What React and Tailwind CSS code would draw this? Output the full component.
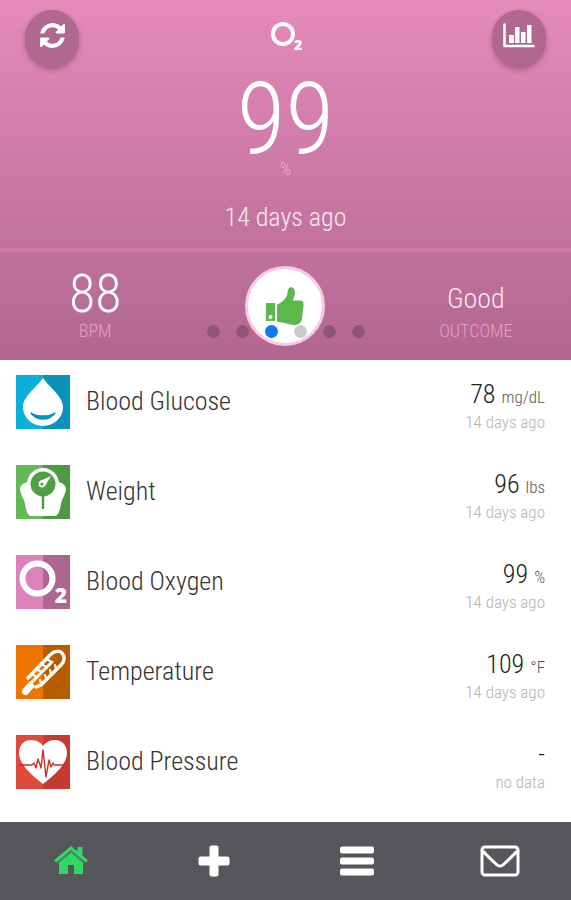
const readings = [
  { name: 'Blood Glucose', value: '78', unit: 'mg/dL', when: '14 days ago', Icon: GlucoseIcon },
  { name: 'Weight', value: '96', unit: 'lbs', when: '14 days ago', Icon: WeightIcon },
  { name: 'Blood Oxygen', value: '99', unit: '%', when: '14 days ago', Icon: OxygenIcon },
  { name: 'Temperature', value: '109', unit: '°F', when: '14 days ago', Icon: TemperatureIcon },
  { name: 'Blood Pressure', value: '-', unit: '', when: 'no data', Icon: PressureIcon },
];

const pages = [
  'bg-black/20',
  'bg-black/20',
  'bg-[#0a7cf5]',
  'bg-black/20',
  'bg-black/20',
  'bg-black/20',
];

function Tile({ left, right, children }) {
  return (
    <svg viewBox="0 0 54 54" className="size-[54px] shrink-0" aria-hidden="true">
      <rect width="27" height="54" fill={left} />
      <rect x="27" width="27" height="54" fill={right} />
      {children}
    </svg>
  );
}

function GlucoseIcon() {
  return (
    <Tile left="#0bb0d8" right="#0a93b8">
      <path d="M27 3C23 10 7 21 7 32a20 19 0 0 0 40 0C47 21 31 10 27 3Z" fill="#fff" />
      <path d="M15 38c6 8 18 8 24 0-6 4-18 4-24 0Z" fill="#0a93b8" stroke="#0a93b8" strokeWidth="1.5" strokeLinejoin="round" />
    </Tile>
  );
}

function WeightIcon() {
  return (
    <Tile left="#62b955" right="#4e9a44">
      <path
        d="M12 17h30c3 0 8 3 8 7 0 5-4 9-5 15-1 7-3 12-6 12H15c-3 0-5-5-6-12C8 33 4 29 4 24c0-4 5-7 8-7Z"
        fill="#fff"
      />
      <circle cx="27" cy="19" r="16" fill="#fff" />
      <circle cx="27" cy="19" r="12.5" fill="#4fa045" />
      <path d="M27 28v16" stroke="#4e9a44" strokeWidth="2.4" />
      <path d="M35 11 24 16l0 5 5 0Z" fill="#fff" />
      <circle cx="26" cy="19" r="3.4" fill="#fff" />
      <circle cx="26" cy="19" r="1.5" fill="#4e9a44" />
    </Tile>
  );
}

function OxygenIcon() {
  return (
    <Tile left="#dc82b8" right="#ac668f">
      <circle cx="21.5" cy="23.5" r="15" fill="none" stroke="#fff" strokeWidth="6" />
      <text x="45" y="48" textAnchor="middle" fontSize="21" fontWeight="800" fill="#fff" className="font-['Open_Sans',sans-serif]">2</text>
    </Tile>
  );
}

function TemperatureIcon() {
  return (
    <Tile left="#ef7400" right="#b85c00">
      <path d="M12 33 34 10c4-4 9-5 12-2s3 8-1 12L25 40l-5 2" fill="none" stroke="#fff" strokeWidth="3.4" strokeLinecap="round" strokeLinejoin="round" />
      <path d="M12 41 36 17" stroke="#fff" strokeWidth="3" strokeLinecap="round" />
      <path d="m15 29 4 2M20 24l4 2M25 19l4 2M30 14l4 2M25 39l-1-4M30 34l-1-4M35 29l-1-4M40 24l-1-4" fill="none" stroke="#fff" strokeWidth="2.2" strokeLinecap="round" />
      <path d="m14 36-7 8a3.500 3.500 0 0 0 5 5l7-8Z" fill="#fff" />
    </Tile>
  );
}

function PressureIcon() {
  return (
    <Tile left="#e04a3c" right="#c53a30">
      <path d="M27 49C17 41 3 30 3 18 3 9 9 5 15 5c6 0 10 3 12 6 2-3 6-6 12-6s12 4 12 13c0 12-14 23-24 31Z" fill="#fff" />
      <path d="M3 30h13l2-2 2 5 2-9 3 9 2-18 3 27 3-17 2 7 2-4 1 2h13" fill="none" stroke="#c62f28" strokeWidth="1.4" strokeLinejoin="round" />
    </Tile>
  );
}

function RoundButton({ label, children }) {
  return (
    <button
      type="button"
      aria-label={label}
      className="flex h-[58px] w-[54px] items-start justify-center rounded-full bg-[#b0688f] pt-[13px] shadow-[0_2px_5px_rgba(90,30,70,0.35)]"
    >
      {children}
    </button>
  );
}

function Reading({ name, value, unit, when, Icon }) {
  return (
    <li className="flex h-[90px] items-start gap-4 last:h-20">
      <Icon />
      <span className="flex-1 pt-2 text-[26px] leading-9 text-[#333]">{name}</span>
      <div className="pt-px text-right">
        <p className="text-[26px] leading-9 text-[#222]">
          {value}
          {unit && <span className="ml-[6px] text-[17px] leading-none text-[#555]">{unit}</span>}
        </p>
        <p className="text-[17px] leading-5 text-[#b4b4b4]">{when}</p>
      </div>
    </li>
  );
}

export default function App() {
  return (
    <div className="flex min-h-screen flex-col bg-white font-['Roboto_Condensed','Roboto',sans-serif] font-light">
      <header className="bg-linear-to-b from-[#e68abc] to-[#b0678f]">
        <div className="flex h-[248px] items-start justify-between px-[25px] pt-[10px]">
          <RoundButton label="Refresh">
            <svg viewBox="128 128 1536 1536" className="size-[25px]" fill="#fff" aria-hidden="true">
              <path d="M1639 1056q0 5-1 7-64 268-268 434.500t-478 166.500q-146 0-282.500-55t-243.500-157l-129 129q-19 19-45 19t-45-19-19-45v-448q0-26 19-45t45-19h448q26 0 45 19t19 45-19 45l-137 137q71 66 161 102t187 36q134 0 250-65t186-179q11-17 53-117 8-23 30-23h192q13 0 22.500 9.500t9.500 22.500zm25-800v448q0 26-19 45t-45 19h-448q-26 0-45-19t-19-45 19-45l138-138q-148-137-349-137-134 0-250 65t-186 179q-11 17-53 117-8 23-30 23h-199q-13 0-22.500-9.500t-9.500-22.500v-7q65-268 270-434.500t480-166.500q146 0 284 55.500t245 156.500l130-129q19-19 45-19t45 19 19 45z" />
            </svg>
          </RoundButton>
          <div className="flex flex-col items-center pt-[10px] text-white">
            <svg viewBox="0 0 34 32" className="h-8 w-[34px] overflow-visible" aria-label="Blood oxygen">
              <circle cx="14" cy="14" r="10" fill="none" stroke="#fff" strokeWidth="4" />
              <text x="29" y="30" textAnchor="middle" fontSize="14" fontWeight="800" fill="#fff" className="font-['Open_Sans',sans-serif]">2</text>
            </svg>
            <p className="mt-[18px] text-[100px] leading-[100px]">99</p>
            <p className="-mt-[11px] text-[18px] leading-5 text-[#f3b0d6]">%</p>
            <p className="mt-5 text-[26px] leading-9 text-[#fbe6f2]">14 days ago</p>
          </div>
          <RoundButton label="Charts">
            <svg viewBox="0 0 32 25" className="h-[25px] w-8" aria-hidden="true">
              <path d="M1.500 1.500v21.500H30.500" fill="none" stroke="#fff" strokeWidth="2.500" strokeLinejoin="round" strokeLinecap="round" />
              <path d="M6 12h5v8H6zM12 4h4.500v16H12zM18 9h4.500v11H18zM24 2h4.500v18H24z" fill="#fff" />
            </svg>
          </RoundButton>
        </div>
        <section className="relative grid h-[112px] grid-cols-3 border-t-4 border-[#cd7ba8]">
          <div className="flex flex-col items-center pt-[15px]">
            <p className="text-[54px] leading-[54px] text-white">88</p>
            <p className="text-[18px] leading-5 text-[#e79bc7]">BPM</p>
          </div>
          <div className="flex justify-center pt-[14px]">
            <div className="flex size-20 items-center justify-center rounded-full border-[3px] border-[#fbc8e3] bg-white">
              <svg viewBox="0 0 38 38" className="size-[38px]" fill="#5cb84c" aria-label="Thumbs up">
                <path fillRule="evenodd" d="M0 16h9v18H0zM4.500 28a2 2 0 1 0 0 4 2 2 0 0 0 0-4Z" />
                <path d="M12 17c4-1 8-6 9-9 1-2 0-6 3-7.500 3-1 5 2 5 5 0 3-2 6-2 8h7c3 0 4 2 3.500 5L36 32c-1 4-4 6-8 6-5 0-10-3-16-3l-1-1V18Z" />
              </svg>
            </div>
          </div>
          <div className="flex flex-col items-center pt-[29px]">
            <p className="text-[28px] leading-9 text-[#fbe6f2]">Good</p>
            <p className="mt-1 text-[18px] leading-5 text-[#e79bc7]">OUTCOME</p>
          </div>
          <div className="absolute inset-x-0 bottom-[22px] flex justify-center gap-4">
            {pages.map((color, i) => (
              <span key={i} className={'size-[13px] rounded-full ' + color} />
            ))}
          </div>
        </section>
      </header>

      <main className="flex-1">
        <ul className="pr-[26px] pt-[15px] pl-4">
          {readings.map((reading) => (
            <Reading key={reading.name} {...reading} />
          ))}
        </ul>
      </main>

      <nav className="grid h-[78px] grid-cols-4 items-center justify-items-center bg-[#56575a] text-white">
        <button type="button" aria-label="Home">
          <svg viewBox="0 0 34 30" className="h-[30px] w-[34px]" fill="#33d765" aria-hidden="true">
            <path d="M17 5 5 15v13h9v-9h6v9h9V15Z" />
            <path d="m1 15.500 16-13.500 16 13.500" fill="none" stroke="#33d765" strokeWidth="3" />
            <path d="M23.500 1h5v10l-5-4.500Z" />
            <path d="M3.500 17.500 17 6l13.500 11.500" fill="none" stroke="#3f8a55" strokeWidth="1.200" />
          </svg>
        </button>
        <button type="button" aria-label="Add">
          <svg viewBox="0 0 32 32" className="size-8" aria-hidden="true">
            <rect x="11.500" y="0.500" width="9" height="31" rx="2" fill="#fff" />
            <rect x="0.500" y="11.500" width="31" height="9" rx="2" fill="#fff" />
          </svg>
        </button>
        <button type="button" aria-label="Menu">
          <svg viewBox="0 0 34 30" className="h-[30px] w-[34px]" fill="#fff" aria-hidden="true">
            <rect y="0.500" width="34" height="7" rx="2" />
            <rect y="11.500" width="34" height="7" rx="2" />
            <rect y="22.500" width="34" height="7" rx="2" />
          </svg>
        </button>
        <button type="button" aria-label="Messages">
          <svg viewBox="0 0 40 32" className="h-8 w-10" fill="none" stroke="#fff" strokeWidth="3" strokeLinejoin="round" aria-hidden="true">
            <rect x="2" y="2" width="36" height="28" rx="3" />
            <path d="M3 6c4 5 9 9 13 13 3 3 5 3 8 0 4-4 9-8 13-13" />
          </svg>
        </button>
      </nav>
    </div>
  );
}
